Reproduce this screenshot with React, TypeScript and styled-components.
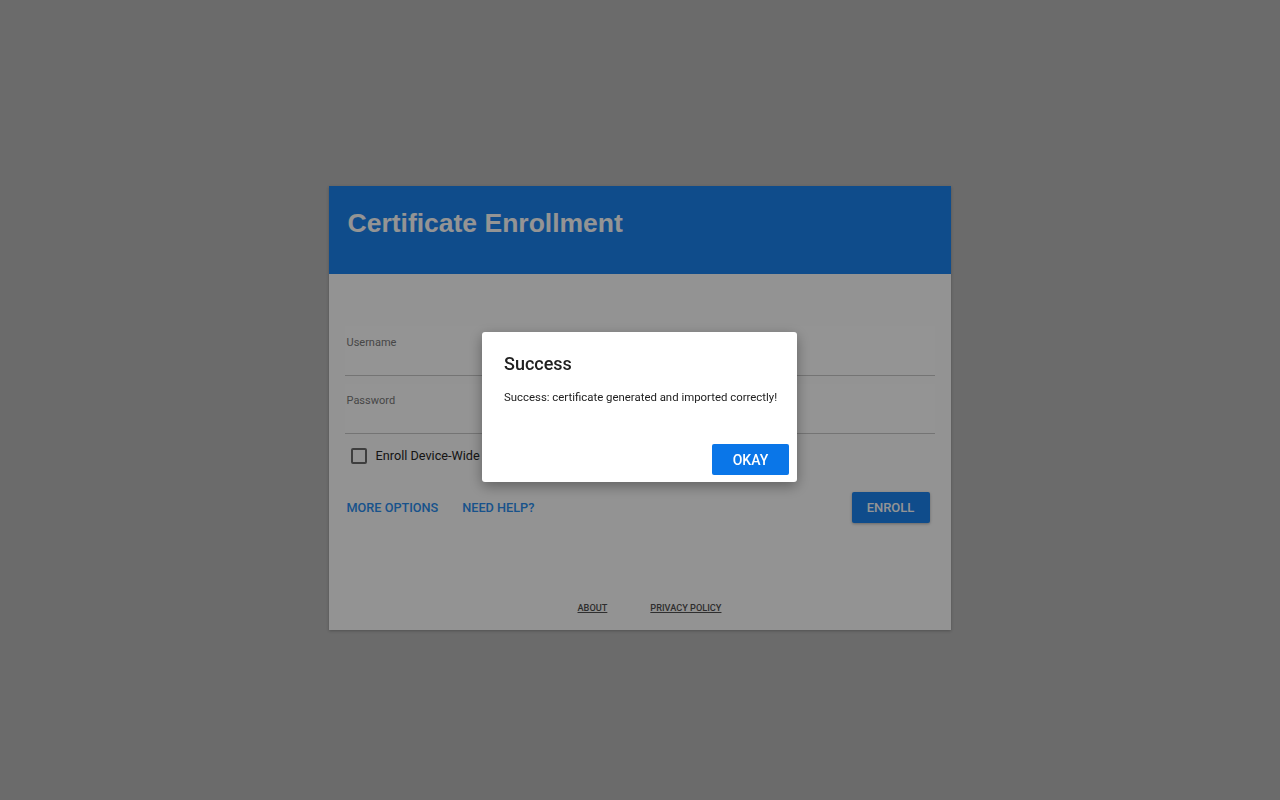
import * as React from "react";
import styled, { createGlobalStyle } from "styled-components";

const GlobalStyle = createGlobalStyle`
  html, body {
    margin: 0;
    padding: 0;
    height: 100%;
  }
  body {
    background: #b9b9b9;
    font-family: Roboto, "Noto Sans", Arial, sans-serif;
  }
`;

const Page = styled.div`
  min-height: 100vh;
  display: flex;
  flex-direction: column;
  align-items: center;
  padding-top: 186px;
  box-sizing: border-box;
`;

const Card = styled.div`
  width: 622px;
  height: 444px;
  background: #fdfdfd;
  display: flex;
  flex-direction: column;
  box-shadow: 0 1px 3px rgba(0, 0, 0, 0.25);
  margin-left: -1px;
`;

const Header = styled.div`
  height: 88px;
  box-sizing: border-box;
  padding: 22px 19px;
  background: #1a84f0;
`;

const Title = styled.h1`
  margin: 0;
  font-family: "Liberation Sans", Arial, sans-serif;
  font-weight: 700;
  font-size: 26.5px;
  line-height: 30px;
  color: #ffffff;
`;

const Body = styled.div`
  flex: 1;
  display: flex;
  flex-direction: column;
  padding: 52px 16px 0;
`;

const Fields = styled.div`
  display: flex;
  flex-direction: column;
  gap: 8px;
`;

const Field = styled.label`
  display: flex;
  flex-direction: column;
  padding-top: 10px;
  background: #ffffff;
  border-bottom: 1px solid #c8c8c8;
`;

const FieldLabel = styled.span`
  padding-left: 2px;
  font-size: 11px;
  line-height: 14px;
  color: #7a7a7a;
`;

const Input = styled.input`
  height: 25px;
  border: none;
  background: transparent;
  outline: none;
  padding: 0 2px;
  font-family: inherit;
  font-size: 14px;
`;

const CheckRow = styled.label`
  display: flex;
  align-items: center;
  gap: 9px;
  margin: 14px 0 0 6px;
  font-size: 12.7px;
  line-height: 16px;
  color: #262626;
`;

const Box = styled.span`
  width: 16px;
  height: 16px;
  box-sizing: border-box;
  border: 2px solid #6b6b6b;
  border-radius: 2px;
`;

const Actions = styled.div`
  display: flex;
  align-items: center;
  gap: 24px;
  margin-top: 28px;
  padding-left: 2px;
`;

const TextButton = styled.button`
  border: none;
  background: none;
  padding: 0;
  font-family: Roboto, sans-serif;
  font-weight: 500;
  font-size: 12.7px;
  line-height: 31px;
  color: #2a8ef0;
  cursor: pointer;
`;

const RaisedButton = styled.button<{ $mr: number }>`
  width: 78px;
  height: 31px;
  padding: 0;
  margin-right: ${(p) => p.$mr}px;
  border: none;
  border-radius: 2px;
  background: #1a84f0;
  color: #ffffff;
  font-family: Roboto, sans-serif;
  font-weight: 500;
  font-size: 13px;
  box-shadow: 0 1px 3px rgba(0, 0, 0, 0.3);
  cursor: pointer;
`;

const Spacer = styled.div`
  flex: 1;
`;

const Footer = styled.div`
  margin-top: auto;
  display: flex;
  justify-content: center;
  gap: 43px;
  padding: 0 0 16px 20px;
`;

const FooterLink = styled.a`
  font-family: Roboto, sans-serif;
  font-weight: 500;
  font-size: 9.2px;
  line-height: 12px;
  color: #505050;
  text-decoration: underline;
  cursor: pointer;
`;

const Overlay = styled.div`
  position: fixed;
  inset: 0;
  background: rgba(0, 0, 0, 0.42);
  display: flex;
  align-items: center;
  justify-content: center;
  padding-top: 14px;
  box-sizing: border-box;
`;

const Dialog = styled.div`
  width: 315px;
  height: 150px;
  box-sizing: border-box;
  background: #ffffff;
  border-radius: 3px;
  padding: 20px 8px 7px 22px;
  display: flex;
  flex-direction: column;
  box-shadow: 0 4px 14px rgba(0, 0, 0, 0.35);
  margin-left: -1px;
`;

const DialogTitle = styled.h2`
  margin: 0;
  font-family: Roboto, sans-serif;
  font-weight: 500;
  font-size: 18px;
  line-height: 24px;
  color: #212121;
`;

const DialogText = styled.p`
  margin: 13px 0 0;
  font-size: 11.4px;
  line-height: 16px;
  color: #212121;
`;

const DialogActions = styled.div`
  margin-top: auto;
  display: flex;
  justify-content: flex-end;
`;

const OkayButton = styled(RaisedButton)`
  width: 77px;
  background: #0a76e8;
  font-size: 14px;
  box-shadow: none;
`;

export default function App() {
  return (
    <>
      <GlobalStyle />
      <Page>
        <Card>
          <Header>
            <Title>Certificate Enrollment</Title>
          </Header>
          <Body>
            <Fields>
              <Field>
                <FieldLabel>Username</FieldLabel>
                <Input type="text" />
              </Field>
              <Field>
                <FieldLabel>Password</FieldLabel>
                <Input type="password" />
              </Field>
            </Fields>
            <CheckRow>
              <Box />
              Enroll Device-Wide Certificate
            </CheckRow>
            <Actions>
              <TextButton>MORE OPTIONS</TextButton>
              <TextButton>NEED HELP?</TextButton>
              <Spacer />
              <RaisedButton $mr={5}>ENROLL</RaisedButton>
            </Actions>
          </Body>
          <Footer>
            <FooterLink>ABOUT</FooterLink>
            <FooterLink>PRIVACY POLICY</FooterLink>
          </Footer>
        </Card>
      </Page>
      <Overlay>
        <Dialog>
          <DialogTitle>Success</DialogTitle>
          <DialogText>Success: certificate generated and imported correctly!</DialogText>
          <DialogActions>
            <OkayButton $mr={0}>OKAY</OkayButton>
          </DialogActions>
        </Dialog>
      </Overlay>
    </>
  );
}
